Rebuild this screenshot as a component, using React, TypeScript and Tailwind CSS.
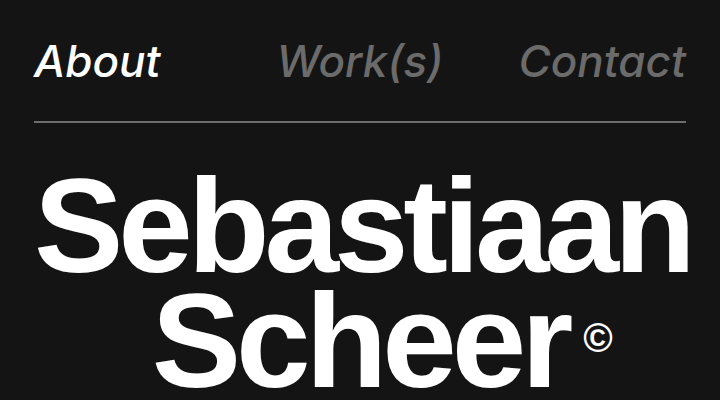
export default function App() {
  return (
    <div className="w-[720px] h-[400px] overflow-hidden bg-[#141414] px-[34px]">
      <nav
        className="grid grid-cols-3 pt-[39px] text-[44px] leading-none italic font-medium"
        style={{ fontFamily: "Inter, 'Liberation Sans', sans-serif" }}
      >
        <span className="text-left text-white">About</span>
        <span className="text-center text-[#6b6b6b]">Work(s)</span>
        <span className="text-right text-[#6b6b6b]">Contact</span>
      </nav>
      <div className="mt-[38px] h-[2px] bg-[#6e6e6e]" />
      <h1
        className="mt-[45px] text-center text-white font-bold text-[134px] leading-[115px] tracking-[-0.038em]"
        style={{ fontFamily: "'Liberation Sans', Arial, sans-serif" }}
      >
        <div>Sebastiaan</div>
        <div>
          <span className="relative">
            Scheer
            <span className="absolute left-[calc(100%+15px)] top-[52px] text-[40px] leading-none tracking-normal">
              ©
            </span>
          </span>
        </div>
      </h1>
    </div>
  );
}
